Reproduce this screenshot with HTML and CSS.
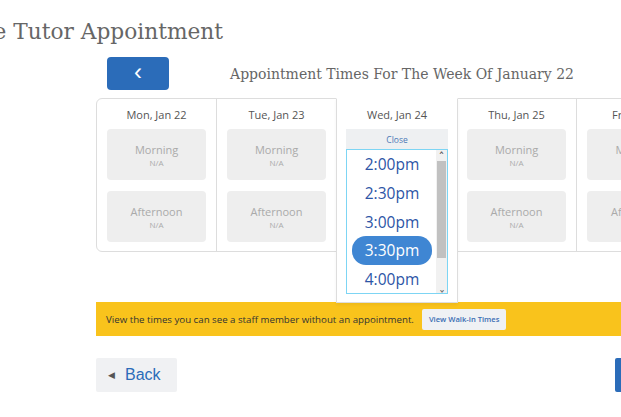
FILE: index.html
```html
<!DOCTYPE html>
<html lang="en">
<head>
    <meta charset="UTF-8">
    <meta name="viewport" content="width=device-width, initial-scale=1.0">
    <title>Schedule Tutor Appointment</title>
    <link rel="stylesheet" href="styles.css">
</head>
<body>
    <h1 class="page-title">Schedule Tutor Appointment</h1>

    <div class="scheduler">
        <div class="week-bar">
            <button class="prev-week">&#8249;</button>
            <h2 class="week-title">Appointment Times For The Week Of January 22</h2>
            <span></span>
        </div>

        <div class="calendar">
            <div class="day">
                <div class="day-name">Mon, Jan 22</div>
                <div class="slot"><span class="slot-name">Morning</span><span class="slot-state">N/A</span></div>
                <div class="slot"><span class="slot-name">Afternoon</span><span class="slot-state">N/A</span></div>
            </div>
            <div class="day">
                <div class="day-name">Tue, Jan 23</div>
                <div class="slot"><span class="slot-name">Morning</span><span class="slot-state">N/A</span></div>
                <div class="slot"><span class="slot-name">Afternoon</span><span class="slot-state">N/A</span></div>
            </div>
            <div class="day open">
                <div class="picker">
                    <div class="day-name">Wed, Jan 24</div>
                    <div class="close-bar">Close</div>
                    <div class="time-list">
                        <ul class="times">
                            <li>2:00pm</li>
                            <li>2:30pm</li>
                            <li>3:00pm</li>
                            <li class="selected">3:30pm</li>
                            <li>4:00pm</li>
                        </ul>
                        <div class="scrollbar">
                            <span class="arrow">&#710;</span>
                            <span class="thumb"></span>
                            <span class="arrow down">&#710;</span>
                        </div>
                    </div>
                </div>
            </div>
            <div class="day">
                <div class="day-name">Thu, Jan 25</div>
                <div class="slot"><span class="slot-name">Morning</span><span class="slot-state">N/A</span></div>
                <div class="slot"><span class="slot-name">Afternoon</span><span class="slot-state">N/A</span></div>
            </div>
            <div class="day">
                <div class="day-name">Fri, Jan 26</div>
                <div class="slot"><span class="slot-name">Morning</span><span class="slot-state">N/A</span></div>
                <div class="slot"><span class="slot-name">Afternoon</span><span class="slot-state">N/A</span></div>
            </div>
        </div>

        <div class="walk-in">
            <span>View the times you can see a staff member without an appointment.</span>
            <button class="walk-in-btn">View Walk-in Times</button>
        </div>

        <div class="nav-row">
            <button class="back-btn"><span class="tri">&#9664;</span>Back</button>
            <button class="next-btn">Next</button>
        </div>
    </div>
</body>
</html>
```

FILE: styles.css
```css
body {
    margin: 0;
    font-family: 'Open Sans', sans-serif;
    background-color: #fff;
    color: #555;
    overflow: hidden;
}

.page-title {
    margin: 0 0 0 -95px;
    padding-top: 14px;
    font-family: 'DejaVu Serif', serif;
    font-weight: normal;
    font-size: 21.7px;
    line-height: 36px;
    color: #666;
    white-space: nowrap;
}

.scheduler {
    width: 601px;
    margin: 7px 0 0 96px;
}

.week-bar {
    display: grid;
    grid-template-columns: 1fr auto 1fr;
    align-items: center;
    padding-left: 11px;
}

.prev-week {
    width: 62px;
    height: 33px;
    border: none;
    border-radius: 4px;
    background-color: #2b6cb9;
    color: #fff;
    font-size: 24px;
    line-height: 1;
    padding: 0 0 4px;
}

.week-title {
    margin: 0;
    font-family: 'DejaVu Serif', serif;
    font-weight: normal;
    font-size: 14px;
    color: #666;
    white-space: nowrap;
}

.calendar {
    display: grid;
    grid-template-columns: repeat(5, 120px);
    margin-top: 8px;
    border: 1px solid #ddd;
    border-radius: 6px;
}

.day {
    border-right: 1px solid #ddd;
    padding: 0 10px 9px;
    display: flex;
    flex-direction: column;
    gap: 11px;
}

.day:last-child {
    border-right: none;
}

.day-name {
    height: 30px;
    line-height: 31px;
    font-size: 11px;
    text-align: center;
    color: #555;
    margin-bottom: -11px;
}

.slot {
    height: 51px;
    background-color: #eee;
    border-radius: 4px;
    display: flex;
    flex-direction: column;
    align-items: center;
    justify-content: center;
    color: #aaa;
}

.slot-name {
    font-size: 11px;
    line-height: 14px;
    margin-top: 2px;
}

.slot-state {
    font-size: 8px;
    line-height: 11px;
}

.day.open {
    position: relative;
}

.picker {
    position: absolute;
    top: -1px;
    left: -1px;
    width: 102px;
    height: 195px;
    padding: 0 9px 8px 9px;
    background-color: #fff;
    border: 1px solid #ddd;
    border-top-color: transparent;
    box-shadow: 0 2px 3px rgba(0, 0, 0, 0.05);
    z-index: 2;
}

.picker .day-name {
    margin-bottom: 0;
}

.close-bar {
    height: 20px;
    line-height: 21px;
    background-color: #eef0f2;
    color: #4b78b6;
    font-size: 8.5px;
    text-align: center;
}

.time-list {
    display: flex;
    height: 143px;
    border: 1px solid #7dd5f4;
}

.times {
    flex: 1;
    list-style: none;
    margin: 0;
    padding: 0 4px 0 5px;
}

.times li {
    height: 28.75px;
    line-height: 28px;
    text-align: center;
    font-size: 15.5px;
    color: #2d55a6;
    border-radius: 14px;
}

.times li.selected {
    background-color: #3f86d3;
    color: #fff;
}

.scrollbar {
    width: 11px;
    background-color: #f1f1f1;
    display: flex;
    flex-direction: column;
    align-items: center;
}

.arrow {
    height: 11px;
    font-size: 12px;
    line-height: 16px;
    color: #555;
    font-family: 'DejaVu Sans', sans-serif;
}

.arrow.down {
    transform: rotate(180deg);
    margin-top: auto;
    line-height: 14px;
}

.thumb {
    width: 9px;
    height: 97px;
    background-color: #c1c1c1;
}

.walk-in {
    display: flex;
    align-items: center;
    gap: 8px;
    height: 34px;
    margin-top: 50px;
    padding-left: 10px;
    background-color: #f9c31c;
    font-size: 9.7px;
    color: #333;
}

.walk-in-btn {
    height: 21px;
    padding: 0 7px;
    border: none;
    border-radius: 2px;
    background-color: #eff1f4;
    color: #3a6db3;
    font-family: 'Open Sans', sans-serif;
    font-size: 7.6px;
    font-weight: 600;
}

.nav-row {
    display: flex;
    justify-content: space-between;
    margin-top: 22px;
}

.back-btn, .next-btn {
    height: 34px;
    width: 82px;
    border: none;
    border-radius: 2px;
    font-family: 'Liberation Sans', sans-serif;
    font-size: 16px;
}

.back-btn {
    width: 81px;
    background-color: #f0f1f3;
    color: #2b6cb9;
    text-align: left;
    padding-left: 12px;
}

.tri {
    font-size: 9px;
    color: #555;
    margin-right: 10px;
    vertical-align: 2px;
}

.next-btn {
    background-color: #2b6cb9;
    color: #fff;
}
```
